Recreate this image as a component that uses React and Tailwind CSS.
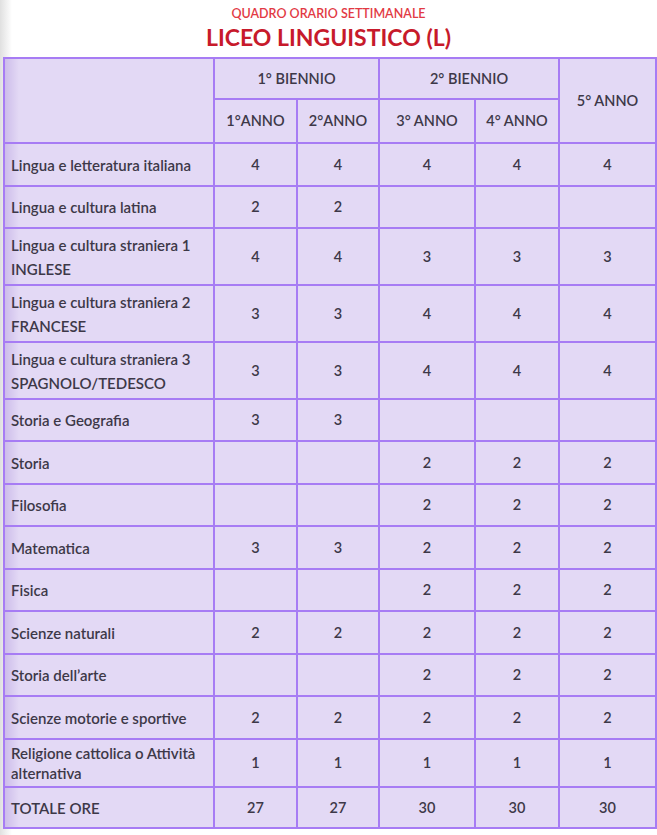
import React from 'react';

const ROWS = [
  { name: ['Lingua e letteratura italiana'], h: 'h-[43px]', v: ['4', '4', '4', '4', '4'] },
  { name: ['Lingua e cultura latina'], h: 'h-[42px]', v: ['2', '2', '', '', ''] },
  { name: ['Lingua e cultura straniera 1', 'INGLESE'], h: 'h-[57px]', v: ['4', '4', '3', '3', '3'] },
  { name: ['Lingua e cultura straniera 2', 'FRANCESE'], h: 'h-[57px]', v: ['3', '3', '4', '4', '4'] },
  { name: ['Lingua e cultura straniera 3', 'SPAGNOLO/TEDESCO'], h: 'h-[57px]', v: ['3', '3', '4', '4', '4'] },
  { name: ['Storia e Geografia'], h: 'h-[42px]', v: ['3', '3', '', '', ''] },
  { name: ['Storia'], h: 'h-[43px]', v: ['', '', '2', '2', '2'] },
  { name: ['Filosofia'], h: 'h-[42px]', v: ['', '', '2', '2', '2'] },
  { name: ['Matematica'], h: 'h-[43px]', v: ['3', '3', '2', '2', '2'] },
  { name: ['Fisica'], h: 'h-[42px]', v: ['', '', '2', '2', '2'] },
  { name: ['Scienze naturali'], h: 'h-[43px]', v: ['2', '2', '2', '2', '2'] },
  { name: ['Storia dell\u2019arte'], h: 'h-[42px]', v: ['', '', '2', '2', '2'] },
  { name: ['Scienze motorie e sportive'], h: 'h-[43px]', v: ['2', '2', '2', '2', '2'] },
  { name: ['Religione cattolica o Attività', 'alternativa'], h: 'h-[48px]', tight: true, v: ['1', '1', '1', '1', '1'] },
  { name: ['TOTALE ORE'], h: 'h-[41px]', v: ['27', '27', '30', '30', '30'] },
];

const cell = 'border-2 border-[#a77cf4] bg-[#e3d9f5] text-center align-middle font-semibold';
const first = 'border-2 border-[#a77cf4] bg-[linear-gradient(to_right,#cdbdea,#e3d9f5_14px)] text-left align-middle pl-[6px] text-[15px]';

export default function App() {
  return (
    <div className="min-h-[835px] w-[657px] bg-[linear-gradient(to_right,#e0e0e0_0px,#ffffff_12px)] font-['Lato','Open_Sans',sans-serif] text-[#3d3848]">
      <div className="flex flex-col items-center pt-[6px]">
        <div className="text-[12.5px] leading-[15px] text-[#e23a44] font-semibold">QUADRO ORARIO SETTIMANALE</div>
        <div className="text-[23px] leading-[29px] mt-[2px] font-bold text-[#c71a2b]">LICEO LINGUISTICO (L)</div>
      </div>
      <table className="ml-[3px] mt-[5px] w-[652px] border-collapse table-fixed text-[14.5px] font-semibold">
        <colgroup>
          <col className="w-[210px]" />
          <col className="w-[83px]" />
          <col className="w-[82px]" />
          <col className="w-[96px]" />
          <col className="w-[84px]" />
          <col className="w-[97px]" />
        </colgroup>
        <thead>
          <tr className="h-[41px]">
            <th rowSpan={2} className={first}></th>
            <th colSpan={2} className={cell}>1° BIENNIO</th>
            <th colSpan={2} className={cell}>2° BIENNIO</th>
            <th rowSpan={2} className={cell}>5° ANNO</th>
          </tr>
          <tr className="h-[44px]">
            <th className={cell}>1°ANNO</th>
            <th className={cell}>2°ANNO</th>
            <th className={cell}>3° ANNO</th>
            <th className={cell}>4° ANNO</th>
          </tr>
        </thead>
        <tbody>
          {ROWS.map((r) => (
            <tr key={r.name[0]} className={r.h}>
              <td className={first + (r.tight ? ' leading-[20px]' : ' leading-[24px]')}>
                {r.name.map((n) => (
                  <div key={n}>{n}</div>
                ))}
              </td>
              {r.v.map((x, i) => (
                <td key={i} className={cell}>{x}</td>
              ))}
            </tr>
          ))}
        </tbody>
      </table>
    </div>
  );
}
